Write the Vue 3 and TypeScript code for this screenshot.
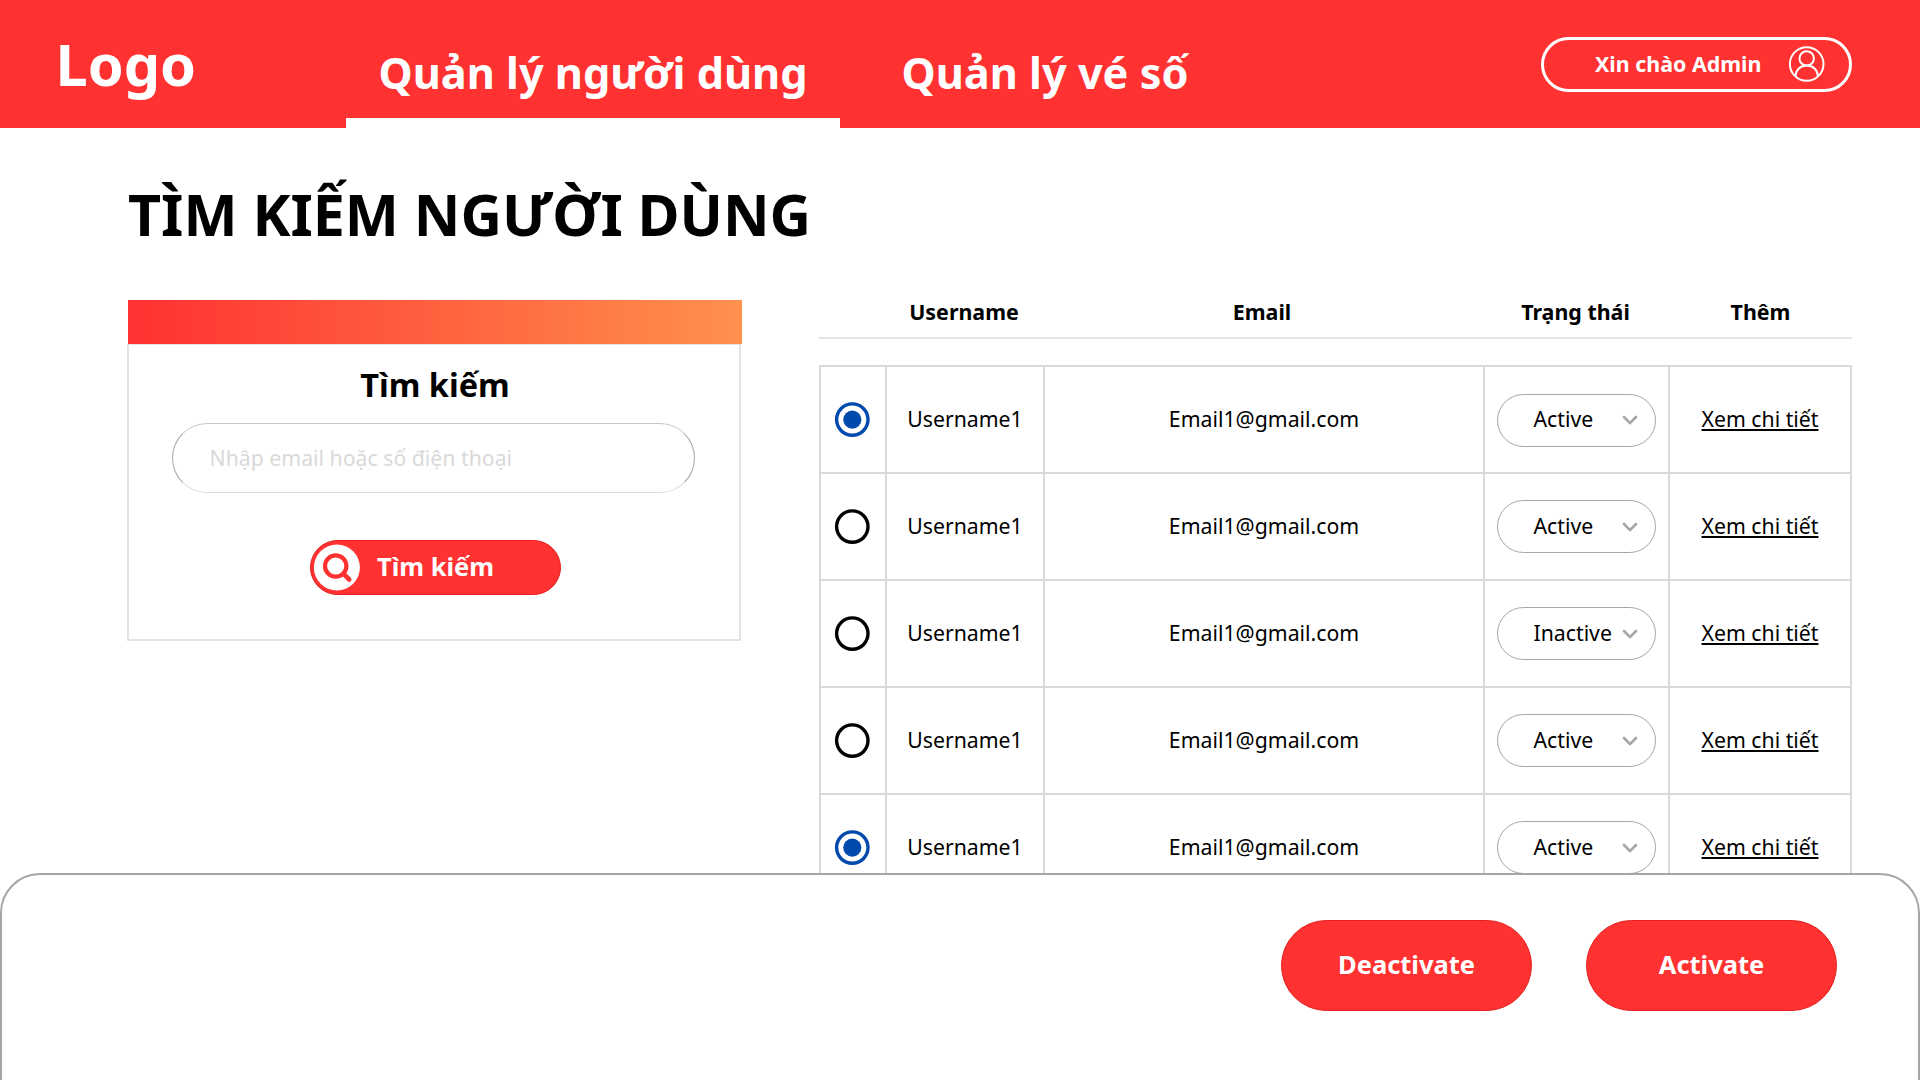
<script setup lang="ts">
import { ref } from 'vue'

interface UserRow {
  id: number
  username: string
  email: string
  status: 'Active' | 'Inactive'
  selected: boolean
}

const users = ref<UserRow[]>([
  { id: 1, username: 'Username1', email: 'Email1@gmail.com', status: 'Active', selected: true },
  { id: 2, username: 'Username1', email: 'Email1@gmail.com', status: 'Active', selected: false },
  { id: 3, username: 'Username1', email: 'Email1@gmail.com', status: 'Inactive', selected: false },
  { id: 4, username: 'Username1', email: 'Email1@gmail.com', status: 'Active', selected: false },
  { id: 5, username: 'Username1', email: 'Email1@gmail.com', status: 'Active', selected: true },
])

const keyword = ref('')
</script>

<template>
  <div class="page">
    <header class="topbar">
      <div class="logo">Logo</div>
      <nav class="nav">
        <a class="tab active">Quản lý người dùng</a>
        <a class="tab">Quản lý vé số</a>
      </nav>
      <div class="account">
        <span>Xin chào Admin</span>
        <svg width="36" height="36" viewBox="0 0 36 36" fill="none" stroke="#fff" stroke-width="2">
          <circle cx="17.700" cy="18" r="16.800" />
          <circle cx="17.700" cy="12.400" r="7.200" />
          <path d="M6.500 30.200C6.700 24 11.500 19.600 17.700 19.600S28.700 24 28.900 30.200" />
        </svg>
      </div>
    </header>

    <h1 class="title">TÌM KIẾM NGƯỜI DÙNG</h1>

    <main class="content">
      <section class="search">
        <div class="search-bar"></div>
        <div class="search-body">
          <h2>Tìm kiếm</h2>
          <input v-model="keyword" class="field" type="text" placeholder="Nhập email hoặc số điện thoại" />
          <button class="search-btn">
            <svg width="47" height="47" viewBox="0 0 47 47" fill="none">
              <circle cx="22.900" cy="23.500" r="23" fill="#fff" />
              <g stroke="#ff3131" stroke-linecap="round">
                <circle cx="21.700" cy="22" r="10.700" stroke-width="4.200" />
                <path d="M30.400 30.700L35.200 35.500" stroke-width="4.600" />
              </g>
            </svg>
            <span>Tìm kiếm</span>
          </button>
        </div>
      </section>

      <section class="list">
        <div class="row head">
          <span></span>
          <span>Username</span>
          <span>Email</span>
          <span>Trạng thái</span>
          <span>Thêm</span>
        </div>
        <div class="grid">
          <div v-for="u in users" :key="u.id" class="row item">
            <div class="cell">
              <svg class="radio" width="36" height="36" viewBox="0 0 36 36" @click="u.selected = !u.selected">
                <circle cx="18.300" cy="17.600" r="15.700" fill="#fff" :stroke="u.selected ? '#004aad' : '#000'" stroke-width="3.400" />
                <circle v-if="u.selected" cx="18.300" cy="17.600" r="9.100" fill="#004aad" />
              </svg>
            </div>
            <div class="cell text">{{ u.username }}</div>
            <div class="cell text">{{ u.email }}</div>
            <div class="cell">
              <div class="select">
                <span>{{ u.status }}</span>
                <svg width="16" height="12" viewBox="0 0 16 12" fill="none" stroke="#a6a6a6" stroke-width="2.600" stroke-linecap="round" stroke-linejoin="round">
                  <path d="M2 3L8 9.200L14 3" />
                </svg>
              </div>
            </div>
            <div class="cell text"><a class="more">Xem chi tiết</a></div>
          </div>
        </div>
      </section>
    </main>

    <footer class="actions">
      <button>Deactivate</button>
      <button>Activate</button>
    </footer>
  </div>
</template>

<style>
body {
  margin: 0;
  overflow: hidden;
}
</style>

<style scoped>
.page {
  position: relative;
  width: 1920px;
  height: 1080px;
  overflow: hidden;
  box-sizing: border-box;
  background: #fff;
  color: #000;
  font-family: "Noto Sans", sans-serif;
}
.page * {
  box-sizing: border-box;
}
.topbar {
  display: flex;
  height: 128px;
  background: #ff3131;
  color: #fff;
  font-weight: 700;
}
.logo {
  width: 346px;
  padding: 24px 0 0 55.500px;
  font-size: 57.600px;
  line-height: 80px;
}
.nav {
  display: flex;
  flex: 1;
}
.tab {
  height: 128px;
  padding: 43px 0 0;
  font-size: 43.250px;
  line-height: 60px;
  white-space: nowrap;
  text-align: center;
}
.tab + .tab {
  margin-left: 61.500px;
}
.tab.active {
  width: 494px;
  border-bottom: 10px solid #fff;
}
.account {
  display: flex;
  align-items: center;
  justify-content: space-between;
  width: 311px;
  height: 55px;
  margin: 36.500px 68px 0 0;
  padding: 0 24px 0 51px;
  border: 3px solid #fff;
  border-radius: 28px;
  font-size: 21.400px;
  line-height: 30px;
  white-space: nowrap;
}
.title {
  margin: 46px 0 0 128px;
  font-size: 57.350px;
  font-weight: 700;
  line-height: 80px;
  height: 80px;
  white-space: nowrap;
}
.content {
  display: flex;
  align-items: flex-start;
  margin-top: 46px;
}
.search {
  width: 615px;
  margin-left: 127px;
}
.search-bar {
  width: 614px;
  height: 44px;
  margin-left: 1px;
  background: linear-gradient(90deg, #ff3131, #ff914d);
}
.search-body {
  display: flex;
  flex-direction: column;
  align-items: center;
  width: 614px;
  height: 297px;
  border: 2px solid #e3e3e3;
  border-top-width: 1px;
}
.search-body h2 {
  margin: 17px 0 0 2px;
  font-size: 32.500px;
  font-weight: 700;
  line-height: 46px;
}
.field {
  width: 523px;
  height: 70px;
  margin: 15px 2px 0 0;
  padding: 0 36px 1px 37px;
  border: 1px solid #a6a6a6;
  border-top-color: #c8c8c8;
  border-bottom-color: #dcdcdc;
  border-radius: 36px;
  outline: none;
  background: transparent;
  font: 400 21.250px "Noto Sans", sans-serif;
}
.field::placeholder {
  color: #d9d9d9;
  opacity: 1;
}
.search-btn {
  display: flex;
  align-items: center;
  gap: 16px;
  width: 251px;
  height: 55px;
  margin: 47px 0 0 3px;
  padding: 0 0 0 3px;
  border: 1px solid #e3201f;
  border-radius: 28px;
  background: #ff3131;
  color: #fff;
  font: 700 25.450px/34px "Noto Sans", sans-serif;
}
.search-btn span {
  padding-bottom: 3px;
}
.list {
  width: 1033px;
  margin-left: 77px;
}
.row {
  display: grid;
  grid-template-columns: 66px 158px 440px 185px 1fr;
}
.head {
  height: 39px;
  border-bottom: 2px solid #e5e5e5;
  font-size: 21.400px;
  font-weight: 700;
  line-height: 24px;
  text-align: center;
}
.head span:nth-child(3) {
  padding-right: 2px;
}
.head span:nth-child(5) {
  padding-left: 1px;
}
.grid {
  margin-top: 26px;
  border: 2px solid #d9d9d9;
  border-bottom: 0;
  border-right: 0;
}
.item {
  height: 107px;
  border-bottom: 2px solid #d9d9d9;
}
.cell {
  display: flex;
  align-items: center;
  justify-content: center;
  border-right: 2px solid #d9d9d9;
  font-size: 21.250px;
  line-height: 30px;
}
.text {
  padding-bottom: 2px;
}
.radio {
  margin-right: 2px;
}
.select {
  display: flex;
  align-items: center;
  justify-content: space-between;
  width: 159px;
  height: 53px;
  margin-right: 1px;
  padding: 0 17px 0 36px;
  border: 1px solid #a6a6a6;
  border-radius: 27px;
}
.select span {
  padding-bottom: 2px;
}
.item:first-child .radio,
.item:first-child .select {
  margin-top: 1px;
}
.more {
  text-decoration: underline;
}
.actions {
  position: absolute;
  left: 0;
  top: 873px;
  display: flex;
  align-items: flex-start;
  justify-content: flex-end;
  gap: 54px;
  width: 1920px;
  height: 220px;
  padding: 45px 81px 0 0;
  border: 2px solid #a6a6a6;
  border-radius: 40px 40px 0 0;
  background: #fff;
}
.actions button {
  width: 251px;
  height: 91px;
  padding: 0 0 3px;
  border: 1px solid #e3201f;
  border-radius: 46px;
  background: #ff3131;
  color: #fff;
  font: 700 25.450px/36px "Noto Sans", sans-serif;
}
</style>
